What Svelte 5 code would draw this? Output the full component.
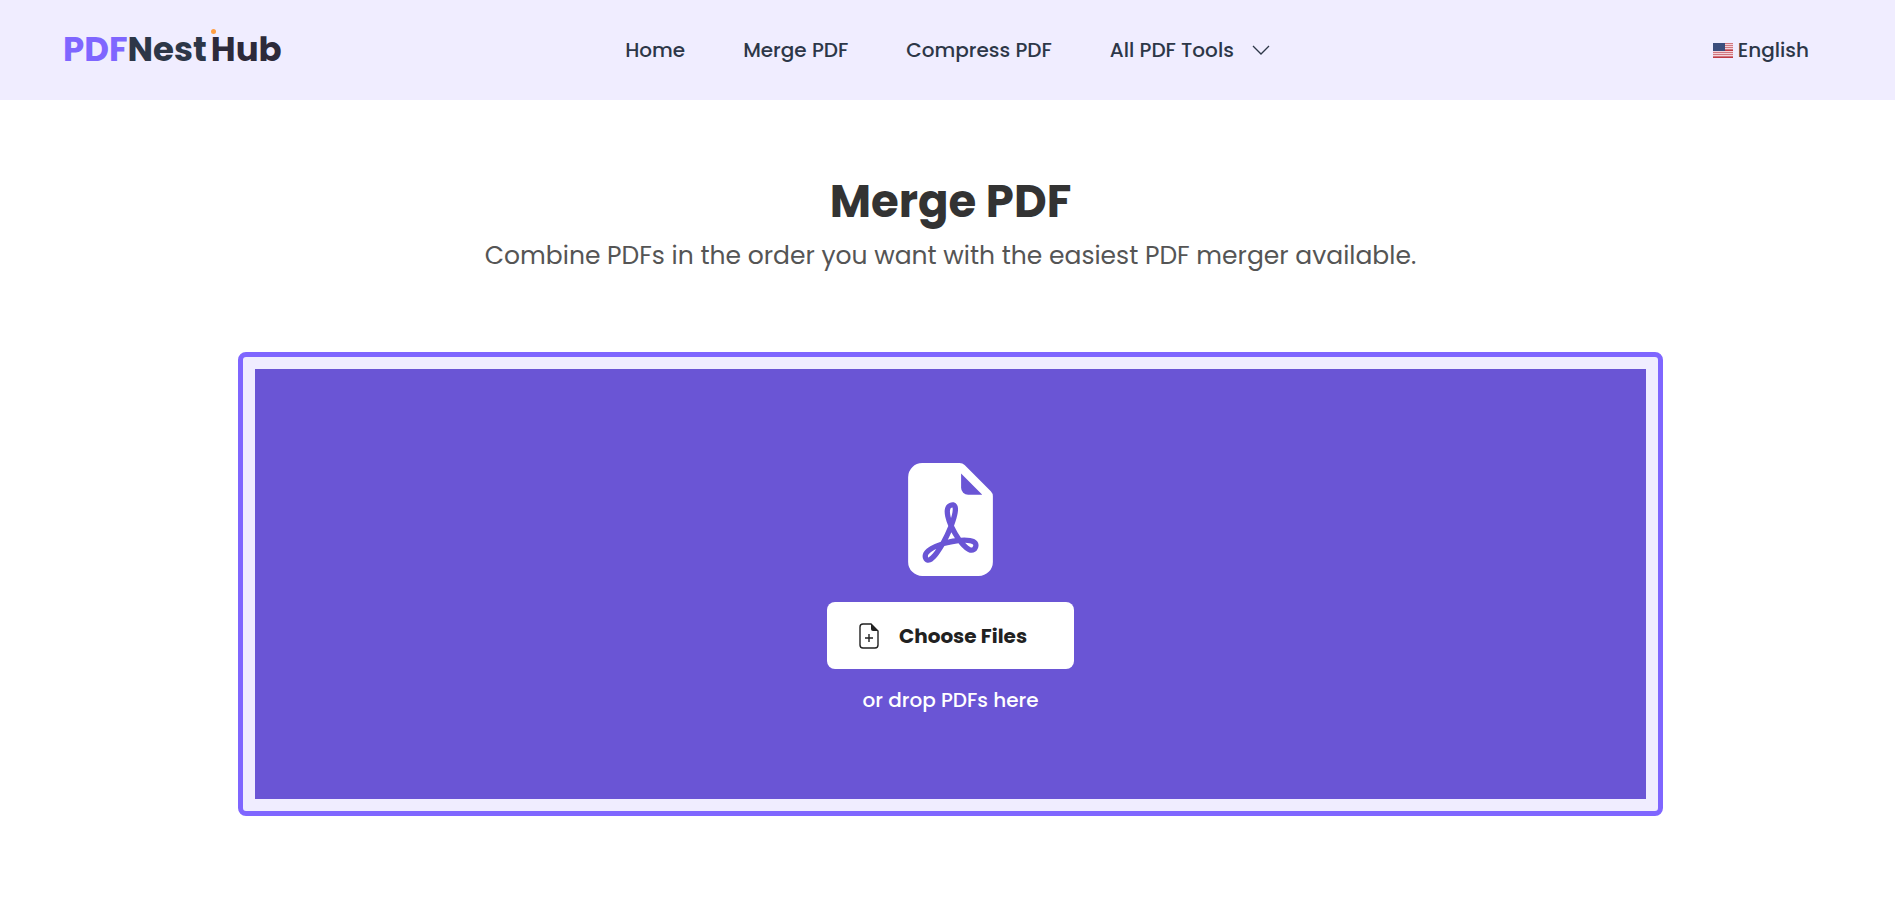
<script>
  const links = [
    { label: "Home", href: "#home" },
    { label: "Merge PDF", href: "#merge" },
    { label: "Compress PDF", href: "#compress" },
  ];

  const stripes = [0, 1, 2, 3, 4, 5, 6];

  let picker;
</script>

<header class="header">
  <a class="logo" href="#home">
    <span class="logo-pdf">PDF</span><span class="logo-nest">Nest</span><span
      class="logo-hub">Hub</span
    >
  </a>

  <nav class="nav">
    {#each links as link}
      <a href={link.href}>{link.label}</a>
    {/each}
    <button type="button" class="tools">
      All PDF Tools
      <svg width="18" height="18" viewBox="0 0 18 18" aria-hidden="true">
        <path
          d="M1 5l8 8 8-8"
          fill="none"
          stroke="currentColor"
          stroke-width="1.3"
        />
      </svg>
    </button>
  </nav>

  <button type="button" class="language">
    <svg width="20" height="15" viewBox="0 0 20 15" aria-hidden="true">
      <rect width="20" height="15" fill="#f3d3da" />
      {#each stripes as i}
        <rect y={i * 2 + (i > 3 ? 1 : 0)} width="20" height="1" fill="#d0767f" />
      {/each}
      <rect y="7" width="20" height="1" fill="#c03a45" />
      <rect y="14" width="20" height="1" fill="#c03a45" />
      <rect width="12" height="8" fill="#3b4d7c" />
    </svg>
    English
  </button>
</header>

<main class="main">
  <h1>Merge PDF</h1>
  <p class="subtitle">
    Combine PDFs in the order you want with the easiest PDF merger available.
  </p>

  <section class="drop-frame">
    <div class="drop-area">
      <svg
        class="pdf-icon"
        width="113"
        height="113"
        viewBox="0 0 16 16"
        fill="currentColor"
        aria-hidden="true"
      >
        <path
          d="M5.523 12.424q.21-.124.459-.238a8 8 0 0 1-.45.606c-.28.337-.498.516-.635.572l-.035.012a.3.3 0 0 1-.026-.044c-.056-.11-.054-.216.04-.36.106-.165.319-.354.647-.548m2.455-1.647q-.178.037-.356.078a21 21 0 0 0 .5-1.05 12 12 0 0 0 .51.858q-.326.048-.654.114m2.525.939a4 4 0 0 1-.435-.41q.344.007.612.054c.317.057.466.147.518.209a.1.1 0 0 1 .026.064.44.44 0 0 1-.06.2.3.3 0 0 1-.094.124.1.1 0 0 1-.069.015c-.09-.003-.258-.066-.498-.256M8.278 6.97c-.04.244-.108.524-.2.829a5 5 0 0 1-.089-.346c-.076-.353-.087-.63-.046-.822.038-.177.11-.248.196-.283a.5.5 0 0 1 .145-.04c.013.03.028.092.032.198q.008.183-.038.465z"
        />
        <path
          fill-rule="evenodd"
          d="M4 0h5.293A1 1 0 0 1 10 .293L13.707 4a1 1 0 0 1 .293.707V14a2 2 0 0 1-2 2H4a2 2 0 0 1-2-2V2a2 2 0 0 1 2-2m5.5 1.5v2a1 1 0 0 0 1 1h2zM4.165 13.668c.09.18.23.343.438.419.207.075.412.04.58-.03.318-.13.635-.436.926-.786.333-.401.683-.927 1.021-1.51a11.7 11.7 0 0 1 1.997-.406c.3.383.61.713.91.95.28.22.603.403.934.417a.86.86 0 0 0 .51-.138c.155-.101.27-.247.354-.416.09-.181.145-.37.138-.563a.84.84 0 0 0-.2-.518c-.226-.27-.596-.4-.96-.465a5.8 5.8 0 0 0-1.335-.05 11 11 0 0 1-.98-1.686c.25-.66.437-1.284.52-1.794.036-.218.055-.426.048-.614a1.24 1.24 0 0 0-.127-.538.7.7 0 0 0-.477-.365c-.202-.043-.41 0-.601.077-.377.15-.576.47-.651.823-.073.34-.04.736.046 1.136.088.406.238.848.43 1.295a20 20 0 0 1-1.062 2.227 7.7 7.7 0 0 0-1.482.645c-.37.22-.699.48-.897.787-.21.326-.275.714-.08 1.103"
        />
      </svg>

      <button type="button" class="choose" on:click={() => picker.click()}>
        <svg width="20" height="26" viewBox="0 0 20 26" aria-hidden="true">
          <path
            d="M4 1h8l7 7v14q0 3-3 3H4q-3 0-3-3V4q0-3 3-3zM10 11v8M6 15h8"
            fill="none"
            stroke="currentColor"
            stroke-width="1.4"
          />
          <path d="M12 1l7 7h-5q-2 0-2-2z" fill="currentColor" />
        </svg>
        Choose Files
      </button>
      <input
        bind:this={picker}
        type="file"
        accept="application/pdf"
        aria-label="Choose Files"
        multiple
        hidden
      />
      <p class="hint">or drop PDFs here</p>
    </div>
  </section>
</main>

<style>
  :global(body) {
    background: #fff;
    font-family: Poppins, Inter, sans-serif;
  }

  button {
    border: 0;
    padding: 0;
    background: none;
    font: inherit;
    color: inherit;
    cursor: pointer;
  }

  a {
    color: inherit;
    text-decoration: none;
  }

  .header {
    display: grid;
    grid-template-columns: 1fr auto 1fr;
    align-items: center;
    height: 100px;
    padding: 0 63px;
    background: #f0edff;
    color: #2d3748;
    font-size: 20px;
    font-weight: 500;
  }

  .logo {
    justify-self: start;
    padding-bottom: 2px;
    font-size: 34px;
    font-weight: 700;
  }

  .logo-pdf {
    color: #7f66ff;
  }

  .logo-hub {
    position: relative;
    margin-left: 4px;
    color: #2d2a3a;
  }

  .logo-hub::before {
    content: "";
    position: absolute;
    top: 4px;
    left: 0;
    width: 5px;
    height: 5px;
    border-radius: 50%;
    background: #ff9f43;
  }

  .nav {
    display: flex;
    align-items: center;
    gap: 58px;
  }

  .tools {
    display: flex;
    align-items: center;
    gap: 18px;
  }

  .language {
    display: flex;
    align-items: center;
    justify-self: end;
    gap: 5px;
    margin-right: 23px;
  }

  .main {
    padding: 74px 232px 92px 238px;
    text-align: center;
  }

  h1 {
    margin: 0;
    color: #333;
    font-size: 45px;
    line-height: 56px;
    font-weight: 700;
  }

  .subtitle {
    margin: 6px 0 76px;
    color: #555;
    font-size: 25px;
    line-height: 40px;
  }

  .drop-frame {
    padding: 12px;
    border: 5px solid #7f66ff;
    border-radius: 8px;
    background: #f0edff;
  }

  .drop-area {
    display: flex;
    flex-direction: column;
    align-items: center;
    padding: 94px 20px 84px;
    background: #6a55d5;
    color: #fff;
  }

  .choose {
    display: flex;
    align-items: center;
    gap: 20px;
    margin-top: 26px;
    padding: 0 47px 0 32px;
    height: 67px;
    border-radius: 8px;
    background: #fff;
    color: #212121;
    font-size: 20px;
    font-weight: 700;
  }

  .hint {
    margin: 16px 0 0;
    font-size: 20px;
    line-height: 30px;
    font-weight: 500;
  }
</style>
